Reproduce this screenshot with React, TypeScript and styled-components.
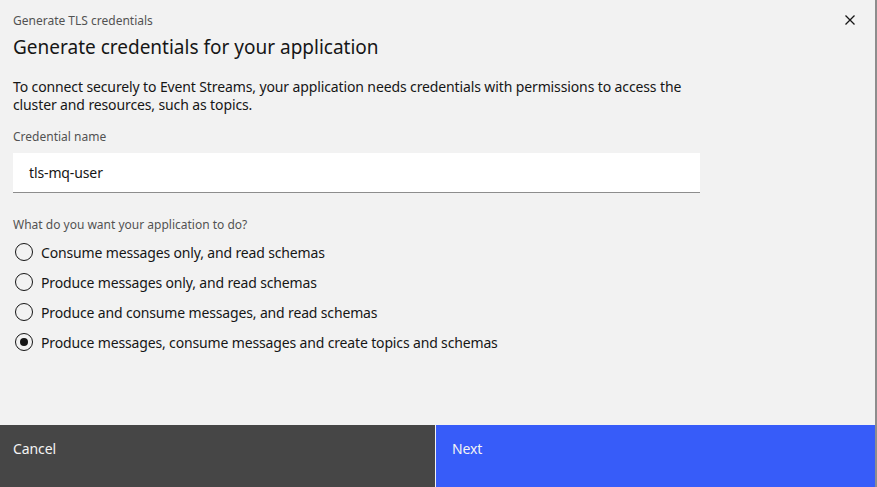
import React from "react";
import styled, { createGlobalStyle } from "styled-components";

const Global = createGlobalStyle`
  html, body { margin: 0; padding: 0; }
  body { background: #8d8d8d; font-family: "Noto Sans", "Liberation Sans", sans-serif; }
  * { box-sizing: border-box; }
`;

const Page = styled.div`
  width: 877px;
  height: 487px;
  display: flex;
  background: #8d8d8d;
`;

const Modal = styled.div`
  width: 875px;
  height: 487px;
  background: #f2f2f2;
  display: flex;
  flex-direction: column;
`;

const Header = styled.div`
  position: relative;
  padding: 13px 13px 0 13px;
`;

const Eyebrow = styled.div`
  font-size: 12px;
  line-height: 16px;
  color: #525252;
`;

const Title = styled.h2`
  margin: 5px 0 0 0;
  font-size: 19px;
  line-height: 26px;
  font-weight: 400;
  color: #161616;
`;

const Close = styled.button`
  position: absolute;
  top: 12px;
  right: 17px;
  width: 16px;
  height: 16px;
  padding: 0;
  border: 0;
  background: transparent;
  display: flex;
  align-items: center;
  justify-content: center;
`;

const Body = styled.div`
  flex: 1;
  padding: 18px 13px 0 13px;
`;

const Paragraph = styled.p`
  margin: 0;
  font-size: 14px;
  line-height: 18px;
  letter-spacing: -0.12px;
  color: #161616;
  max-width: 690px;
`;

const Label = styled.div`
  margin-top: 15px;
  font-size: 12px;
  line-height: 16px;
  color: #525252;
`;

const Input = styled.div`
  margin-top: 8px;
  width: 687px;
  height: 40px;
  background: #ffffff;
  border-bottom: 1px solid #8d8d8d;
  display: flex;
  align-items: center;
  padding-left: 16px;
  font-size: 14px;
  letter-spacing: -0.12px;
  color: #161616;
`;

const Legend = styled.div`
  margin-top: 24px;
  font-size: 12px;
  line-height: 16px;
  color: #525252;
`;

const RadioList = styled.div`
  margin-top: 10px;
  display: flex;
  flex-direction: column;
  gap: 12px;
`;

const RadioRow = styled.label`
  display: flex;
  align-items: center;
  gap: 8px;
  height: 18px;
  font-size: 14px;
  letter-spacing: -0.15px;
  color: #161616;
  padding-left: 2px;
`;

const Circle = styled.span<{ $checked?: boolean }>`
  width: 18px;
  height: 18px;
  border-radius: 50%;
  border: 1px solid #161616;
  display: flex;
  align-items: center;
  justify-content: center;
  flex: none;
  &::after {
    content: "";
    width: 8px;
    height: 8px;
    border-radius: 50%;
    background: #161616;
    display: ${(p) => (p.$checked ? "block" : "none")};
  }
`;

const FooterWrap = styled.div`
  display: flex;
  background: #f2f2f2;
`;

const Footer = styled.div`
  display: flex;
  height: 62px;
`;

const FooterButton = styled.button<{ $primary?: boolean }>`
  flex: ${(p) => (p.$primary ? "0 0 439px" : "0 0 435px")};
  margin-left: ${(p) => (p.$primary ? "1px" : "0")};
  height: 62px;
  border: 0;
  background: ${(p) => (p.$primary ? "#375cf9" : "#464646")};
  color: #f4f4f4;
  font-family: inherit;
  font-size: 14px;
  letter-spacing: -0.1px;
  text-align: left;
  padding: 14px 0 0 ${(p) => (p.$primary ? "16px" : "13px")};
  display: flex;
  align-items: flex-start;
`;

const options = [
  "Consume messages only, and read schemas",
  "Produce messages only, and read schemas",
  "Produce and consume messages, and read schemas",
  "Produce messages, consume messages and create topics and schemas",
];

export default function App() {
  return (
    <Page>
      <Global />
      <Modal>
        <Header>
          <Eyebrow>Generate TLS credentials</Eyebrow>
          <Title>Generate credentials for your application</Title>
          <Close aria-label="Close">
            <svg width="16" height="16" viewBox="0 0 16 16">
              <path d="M3.5 3.5 L12.5 12.5 M12.5 3.5 L3.5 12.5" stroke="#161616" strokeWidth="1.3" fill="none" />
            </svg>
          </Close>
        </Header>
        <Body>
          <Paragraph>
            To connect securely to Event Streams, your application needs credentials with permissions to access the
            cluster and resources, such as topics.
          </Paragraph>
          <Label>Credential name</Label>
          <Input>tls-mq-user</Input>
          <Legend>What do you want your application to do?</Legend>
          <RadioList>
            {options.map((o, i) => (
              <RadioRow key={o}>
                <Circle $checked={i === 3} />
                {o}
              </RadioRow>
            ))}
          </RadioList>
        </Body>
        <FooterWrap>
          <Footer>
            <FooterButton>Cancel</FooterButton>
            <FooterButton $primary>Next</FooterButton>
          </Footer>
        </FooterWrap>
      </Modal>
    </Page>
  );
}
